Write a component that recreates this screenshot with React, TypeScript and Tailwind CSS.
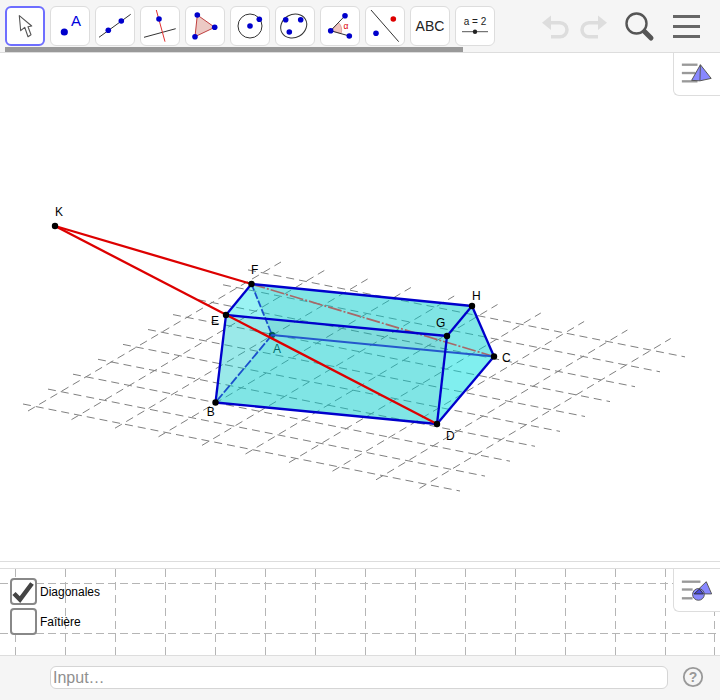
const FONT = "Liberation Sans, Arial, sans-serif";

type Pt = [number, number];

const P: Record<string, Pt> = {
  K: [55, 226],
  F: [251.5, 284],
  E: [226, 315],
  A: [272, 335],
  B: [215.5, 402.5],
  D: [437, 424],
  G: [447, 336],
  H: [472, 306],
  C: [494, 356.5],
};

const LABELS: [string, number, number][] = [
  ["K", 59, 216],
  ["F", 254.7, 274],
  ["E", 215, 325],
  ["B", 210.7, 416],
  ["H", 476.3, 300],
  ["G", 440.7, 327],
  ["C", 506.3, 362],
  ["D", 450.3, 440],
];

// each face has its own tint, the overlaps give the darker bands
const FACES: [string, string, number][] = [
  ["ABDC", "#00e5e5", 0.29],
  ["EFHG", "#00e5e5", 0.29],
  ["EBDG", "#00b9b9", 0.29],
  ["FACH", "#00b9b9", 0.29],
  ["EBAF", "#00dddd", 0.15],
  ["GDCH", "#00dcdc", 0.29],
];
const VISIBLE_EDGES = ["FH", "HG", "GE", "EF", "EB", "BD", "DG", "DC", "CH"];

function pts(names: string) {
  return names
    .split("")
    .map((n) => P[n].join(","))
    .join(" ");
}

function Edge({ a, b, color = "#0000cc", width = 2.3, dash }: { a: string; b: string; color?: string; width?: number; dash?: string }) {
  return (
    <line
      x1={P[a][0]}
      y1={P[a][1]}
      x2={P[b][0]}
      y2={P[b][1]}
      stroke={color}
      strokeWidth={width}
      strokeDasharray={dash}
    />
  );
}

function Construction() {
  return (
    <svg viewBox="0 53 720 508" className="block h-full w-full">
      {Array.from({ length: 10 }).map((_, i) => (
        <line
          key={"x" + i}
          x1={23 + 25 * (9 - i)}
          y1={404 - 14.9 * (9 - i)}
          x2={460 + 25 * (9 - i)}
          y2={491 - 14.9 * (9 - i)}
          stroke="#808080"
          strokeDasharray="8 5"
        />
      ))}
      {Array.from({ length: 10 }).map((_, i) => (
        <line
          key={"y" + i}
          x1={28 + 43.5 * i}
          y1={411 + 8.6 * i}
          x2={281 + 43.3 * i}
          y2={262 + 8.5 * i}
          stroke="#808080"
          strokeDasharray="8 5"
        />
      ))}

      <circle cx={P.A[0]} cy={P.A[1]} r={3.2} fill="#000" />
      <text x={277} y={353} fontSize={12} textAnchor="middle" fill="#000" fontFamily={FONT}>
        A
      </text>

      {FACES.map(([f, color, alpha]) => (
        <polygon key={f} points={pts(f)} fill={color} fillOpacity={alpha} />
      ))}

      <Edge a="F" b="C" color="#a86868" width={1.7} dash="14 2 2 2" />
      <Edge a="F" b="A" color="#1a50cc" width={1.8} dash="7 2" />
      <Edge a="A" b="B" color="#1a50cc" width={1.8} dash="9 2" />
      <Edge a="A" b="C" color="#2458cc" width={1.9} />

      {VISIBLE_EDGES.map((e) => (
        <Edge key={e} a={e[0]} b={e[1]} />
      ))}
      <Edge a="K" b="F" color="#dd0000" />
      <Edge a="K" b="D" color="#dd0000" />

      {["K", "F", "E", "B", "D", "G", "H", "C"].map((n) => (
        <circle key={n} cx={P[n][0]} cy={P[n][1]} r={3.2} fill="#000" />
      ))}
      {LABELS.map(([t, x, y]) => (
        <text key={t} x={x} y={y} fontSize={12} textAnchor="middle" fill="#000" fontFamily={FONT}>
          {t}
        </text>
      ))}
    </svg>
  );
}

function ToolBtn({ active, children }: { active?: boolean; children: React.ReactNode }) {
  return (
    <div
      className={
        active
          ? "h-10 w-10 shrink-0 rounded-md border-2 border-[#6e6eff] bg-white"
          : "h-10 w-10 shrink-0 rounded-md border border-[#dddddd] bg-white"
      }
    >
      <svg viewBox="0 0 40 40" className={active ? "-m-[2px] block h-10 w-10" : "-m-px block h-10 w-10"}>
        {children}
      </svg>
    </div>
  );
}

const BLUE = "#0000cc";
const Dot = ({ x, y, r = 2.8, fill = BLUE }: { x: number; y: number; r?: number; fill?: string }) => (
  <circle cx={x} cy={y} r={r} fill={fill} />
);

function Toolbar() {
  return (
    <header className="relative flex h-[53px] shrink-0 items-start border-b border-[#dddddd] bg-[#f5f5f5]">
      <div className="flex gap-[5px] pl-[5px] pt-[6px]">
        <ToolBtn active>
          <path d="M14.3 9.7 15.7 24.7 19.7 21.3 23 30.7 26 28.7 23 20.7 26.7 20Z" fill="#fff" stroke="#555" strokeWidth={1.1} strokeLinejoin="round" />
        </ToolBtn>
        <ToolBtn>
          <Dot x={14.3} y={26} r={3.6} />
          <text x={26} y={20} fontSize={15} textAnchor="middle" fill="#0000dd" fontFamily={FONT}>
            A
          </text>
        </ToolBtn>
        <ToolBtn>
          <line x1={4} y1={31.3} x2={35.7} y2={8.3} stroke="#333" />
          <Dot x={13.3} y={24.3} />
          <Dot x={26.3} y={15} />
        </ToolBtn>
        <ToolBtn>
          <line x1={4} y1={31.3} x2={35.7} y2={22.7} stroke="#333" />
          <line x1={16.3} y1={4} x2={25} y2={35.7} stroke="#e03030" />
          <Dot x={19} y={13} />
        </ToolBtn>
        <ToolBtn>
          <polygon points="12.3,9 29.7,21.3 10,30.7" fill="#ecc9c4" stroke="#c04040" />
          <Dot x={12.3} y={9} />
          <Dot x={29.7} y={21.3} />
          <Dot x={10} y={30.7} />
        </ToolBtn>
        <ToolBtn>
          <circle cx={20} cy={20} r={12} fill="none" stroke="#333" />
          <Dot x={20} y={20} />
          <Dot x={29.3} y={13.3} />
        </ToolBtn>
        <ToolBtn>
          <ellipse cx={18.7} cy={20} rx={13.5} ry={11.5} transform="rotate(-30 18.7 20)" fill="none" stroke="#333" />
          <Dot x={10.7} y={13.7} />
          <Dot x={25.7} y={13.7} />
          <Dot x={14.3} y={26} />
        </ToolBtn>
        <ToolBtn>
          <path d="M10.7 24.7 18.5 16.5A11 11 0 0 1 21 27.7Z" fill="#efc4be" stroke="#d08080" strokeWidth={0.6} />
          <line x1={10.7} y1={24.7} x2={25} y2={9.7} stroke="#333" />
          <line x1={10.7} y1={24.7} x2={29.3} y2={30} stroke="#333" />
          <Dot x={10.7} y={24.7} />
          <Dot x={25} y={9.7} />
          <Dot x={29.3} y={30} />
          <text x={26} y={23} fontSize={8.5} textAnchor="middle" fill="#dd0000" fontFamily={FONT}>
            α
          </text>
        </ToolBtn>
        <ToolBtn>
          <line x1={6} y1={4} x2={33.7} y2={35.7} stroke="#333" />
          <Dot x={28.3} y={13} fill="#dd0000" />
          <Dot x={11} y={27.3} />
        </ToolBtn>
        <ToolBtn>
          <text x={20} y={25} fontSize={14} textAnchor="middle" fill="#222" fontFamily={FONT}>
            ABC
          </text>
        </ToolBtn>
        <ToolBtn>
          <text x={20} y={19} fontSize={10} textAnchor="middle" fill="#222" fontFamily={FONT}>
            a = 2
          </text>
          <line x1={7} y1={25.7} x2={33} y2={25.7} stroke="#555" />
          <Dot x={20} y={25.7} r={2.2} fill="#222" />
        </ToolBtn>
      </div>

      <div className="ml-[46px] mt-[15px] flex gap-[7px]">
        <svg viewBox="0 0 30 24" className="block h-6 w-[30px]">
          <polygon points="1,7.7 10,0.5 10,15" fill="#dddddd" />
          <path d="M9 7.7H19A7 7 0 0 1 19 21.7H10" fill="none" stroke="#dddddd" strokeWidth={3.5} />
        </svg>
        <svg viewBox="0 0 30 24" className="block h-6 w-[30px]">
          <polygon points="29,7.7 20,0.5 20,15" fill="#dddddd" />
          <path d="M21 7.7H11A7 7 0 0 0 11 21.7H20" fill="none" stroke="#dddddd" strokeWidth={3.5} />
        </svg>
      </div>

      <svg viewBox="0 0 30 30" className="ml-[17px] mt-[12px] block h-[30px] w-[30px] shrink-0">
        <circle cx={11.5} cy={11.5} r={10} fill="none" stroke="#555" strokeWidth={2.4} />
        <line x1={19.5} y1={19.5} x2={26} y2={26} stroke="#555" strokeWidth={5} strokeLinecap="round" />
      </svg>

      <div className="ml-[18px] mt-[15px] flex w-[27px] flex-col gap-[7px]">
        <div className="h-[3px] bg-[#666666]" />
        <div className="h-[3px] bg-[#666666]" />
        <div className="h-[3px] bg-[#666666]" />
      </div>

      <div className="absolute bottom-0 left-[5px] h-[5px] w-[458px] bg-[#999999]" />
    </header>
  );
}

function StyleBtn({ children }: { children: React.ReactNode }) {
  return (
    <div className="absolute right-0 top-0 h-[43px] w-[47px] rounded-bl-md border-b border-l border-[#dddddd] bg-white">
      <svg viewBox="0 0 47 43" className="block h-full w-full">
        {children}
      </svg>
    </div>
  );
}

function AlgebraGrid() {
  const xs = [15, 65, 115, 165, 215, 265, 315, 365, 415, 465, 515, 565, 615, 665, 714];
  return (
    <svg viewBox="0 0 720 86" className="absolute inset-0 block h-full w-full">
      {xs.map((x) => (
        <line key={x} x1={x + 0.5} y1={0} x2={x + 0.5} y2={86} stroke="#b5b5b5" strokeDasharray="8 5" />
      ))}
      {[14.5, 64.5].map((y) => (
        <line key={y} x1={0} y1={y} x2={720} y2={y} stroke="#b5b5b5" strokeDasharray="8 4" />
      ))}
    </svg>
  );
}

function CheckRow({ label, checked }: { label: string; checked?: boolean }) {
  return (
    <div className="flex items-center gap-[3px]">
      <div className="h-[27px] w-[27px] rounded border-2 border-[#888888] bg-white">
        {checked && (
          <svg viewBox="0 0 27 27" className="-m-[2px] block h-[27px] w-[27px]">
            <path d="M4 15.5 10 21.5 22 5.5" fill="none" stroke="#444" strokeWidth={4.5} />
          </svg>
        )}
      </div>
      <span className="text-xs leading-none text-black">{label}</span>
    </div>
  );
}

export default function App() {
  return (
    <div className="flex h-[700px] w-[720px] flex-col overflow-hidden bg-white [font-family:'Liberation_Sans',Arial,sans-serif]">
      <Toolbar />

      <main className="relative h-[508px] shrink-0 bg-white">
        <Construction />
        <StyleBtn>
          <line x1={8} y1={12} x2={24} y2={12} stroke="#999" strokeWidth={2.4} />
          <line x1={8} y1={20.5} x2={22} y2={20.5} stroke="#999" strokeWidth={2.4} />
          <line x1={8} y1={29} x2={24} y2={29} stroke="#999" strokeWidth={2.4} />
          <polygon points="27,12 18,28 26.5,28.5 38,26" fill="#8888ff" stroke="#555" strokeLinejoin="round" />
          <line x1={27} y1={12} x2={26.5} y2={28.5} stroke="#555" />
        </StyleBtn>
      </main>

      <div className="h-2 shrink-0 border-y border-[#dddddd] bg-white" />

      <section className="relative h-[86px] shrink-0 bg-white">
        <AlgebraGrid />
        <div className="relative flex flex-col gap-[3px] pl-[10px] pt-[9px]">
          <CheckRow label="Diagonales" checked />
          <CheckRow label="Faîtière" />
        </div>
        <StyleBtn>
          <line x1={8} y1={13} x2={27} y2={13} stroke="#999" strokeWidth={2.4} />
          <line x1={8} y1={21} x2={19} y2={21} stroke="#999" strokeWidth={2.4} />
          <line x1={8} y1={30} x2={19} y2={30} stroke="#999" strokeWidth={2.4} />
          <polygon points="33,13 38.5,25.5 20,25.5" fill="#8888ff" stroke="#555" />
          <circle cx={25} cy={26} r={6} fill="#8888ff" stroke="#555" />
          <polygon points="26,20.5 30,25.5 20.5,25.5" fill="#4a4ae0" stroke="#333" />
        </StyleBtn>
      </section>

      <footer className="flex flex-1 items-start border-t border-[#dddddd] bg-[#f5f5f5] pl-[50px] pt-[10px]">
        <input
          placeholder="Input…"
          className="h-[23px] w-[618px] rounded-md border border-[#d5d5d5] bg-white px-[2px] text-base outline-none placeholder:text-[#8f8f8f]"
        />
        <svg viewBox="0 0 22 22" className="ml-[14px] block h-[22px] w-[22px] shrink-0">
          <circle cx={11} cy={11} r={9.2} fill="none" stroke="#999" strokeWidth={1.8} />
          <text x={11} y={16} fontSize={14} fontWeight={700} textAnchor="middle" fill="#999" fontFamily={FONT}>
            ?
          </text>
        </svg>
      </footer>
    </div>
  );
}
